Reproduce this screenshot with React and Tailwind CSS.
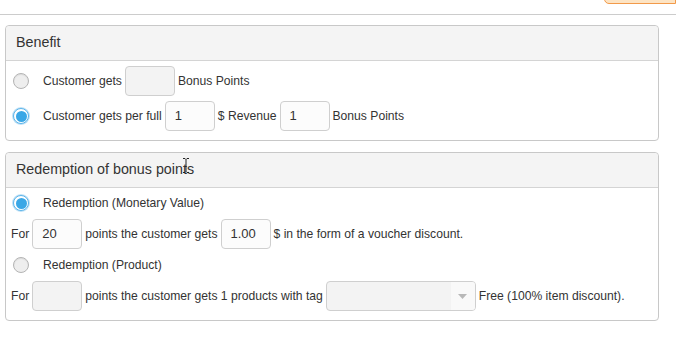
import React from "react";

function Radio({ checked }) {
  if (checked) {
    return (
      <span className="w-[16px] h-[16px] rounded-full border border-[#5bb4ea] bg-white flex items-center justify-center shrink-0 shadow-[0_0_0_1px_#bfe1f6]">
        <span className="w-[11px] h-[11px] rounded-full bg-[#3aa7e6]" />
      </span>
    );
  }
  return (
    <span className="w-[16px] h-[16px] rounded-full border border-[#b4b4b4] bg-[#eeeeee] shrink-0 shadow-[inset_0_1px_1px_rgba(0,0,0,0.08)]" />
  );
}

function Input({ value, w = "w-[50px]" }) {
  const empty = !value;
  return (
    <div
      className={`${w} h-[30px] rounded-[4px] border border-[#cfcfcf] flex items-center pl-[9px] text-[13px] text-[#333] shrink-0 ${
        empty ? "bg-[#f3f3f3]" : "bg-[#fcfcfc]"
      }`}
    >
      {value}
    </div>
  );
}

function Panel({ title, children, cursor }) {
  return (
    <div className="ml-[5px] w-[654px] rounded-[4px] border border-[#c8c8c8] bg-white">
      <div className="relative h-[35px] bg-[#f4f4f4] border-b border-[#d4d4d4] rounded-t-[4px] flex items-center pl-[10px] text-[14.3px] text-[#333]">
        {title}
        {cursor && (
          <svg className="absolute left-[176px] top-[4px]" width="8" height="17" viewBox="0 0 8 17">
            <path d="M1 1.5h2l1 1 1-1h2M4 2.5v12M1 15.5h2l1-1 1 1h2" stroke="#222" strokeWidth="1" fill="none" />
          </svg>
        )}
      </div>
      {children}
    </div>
  );
}

export default function App() {
  return (
    <div
      className="w-[676px] h-[360px] bg-white relative overflow-hidden text-[12.15px] text-[#333]"
      style={{ fontFamily: '"Liberation Sans", Arial, sans-serif' }}
    >
      <div className="absolute right-0 top-[-10px] w-[72px] h-[14px] rounded-bl-[5px] border border-[#f29a4a] bg-[#fde4c4]" />
      <div className="h-[15px] border-b border-[#cccccc]" />
      <div className="h-[10px]" />
      <Panel title="Benefit">
        <div className="pt-[5px] pb-[9px] flex flex-col gap-[5px]">
          <div className="flex items-center h-[30px] pl-[7px]">
            <Radio />
            <span className="ml-[14px]">Customer gets</span>
            <span className="mx-[3px]"><Input /></span>
            <span>Bonus Points</span>
          </div>
          <div className="flex items-center h-[30px] pl-[7px]">
            <Radio checked />
            <span className="ml-[14px]">Customer gets per full</span>
            <span className="mx-[3px]"><Input value="1" /></span>
            <span>$ Revenue</span>
            <span className="mx-[3px]"><Input value="1" /></span>
            <span>Bonus Points</span>
          </div>
        </div>
      </Panel>
      <div className="h-[11px]" />
      <Panel title="Redemption of bonus points" cursor>
        <div className="pt-0 pb-[9px] flex flex-col gap-[1px]">
          <div className="flex items-center h-[30px] pl-[7px]">
            <Radio checked />
            <span className="ml-[14px]">Redemption (Monetary Value)</span>
          </div>
          <div className="flex items-center h-[30px] pl-[5px]">
            <span>For</span>
            <span className="mx-[3px]"><Input value="20" /></span>
            <span>points the customer gets</span>
            <span className="mx-[3px]"><Input value="1.00" /></span>
            <span>$ in the form of a voucher discount.</span>
          </div>
          <div className="flex items-center h-[30px] pl-[7px]">
            <Radio />
            <span className="ml-[14px]">Redemption (Product)</span>
          </div>
          <div className="flex items-center h-[30px] pl-[5px]">
            <span>For</span>
            <span className="mx-[3px]"><Input /></span>
            <span>points the customer gets 1 products with tag</span>
            <span className="mx-[3px]">
              <div className="w-[150px] h-[30px] rounded-[4px] border border-[#cfcfcf] bg-[#f3f3f3] flex overflow-hidden">
                <div className="flex-1" />
                <div className="w-[24px] bg-[#f9f9f9] flex items-center justify-center">
                  <svg width="9" height="5" viewBox="0 0 9 5">
                    <path d="M0 0h9L4.5 5z" fill="#b8b8b8" />
                  </svg>
                </div>
              </div>
            </span>
            <span>Free (100% item discount).</span>
          </div>
        </div>
      </Panel>
    </div>
  );
}
